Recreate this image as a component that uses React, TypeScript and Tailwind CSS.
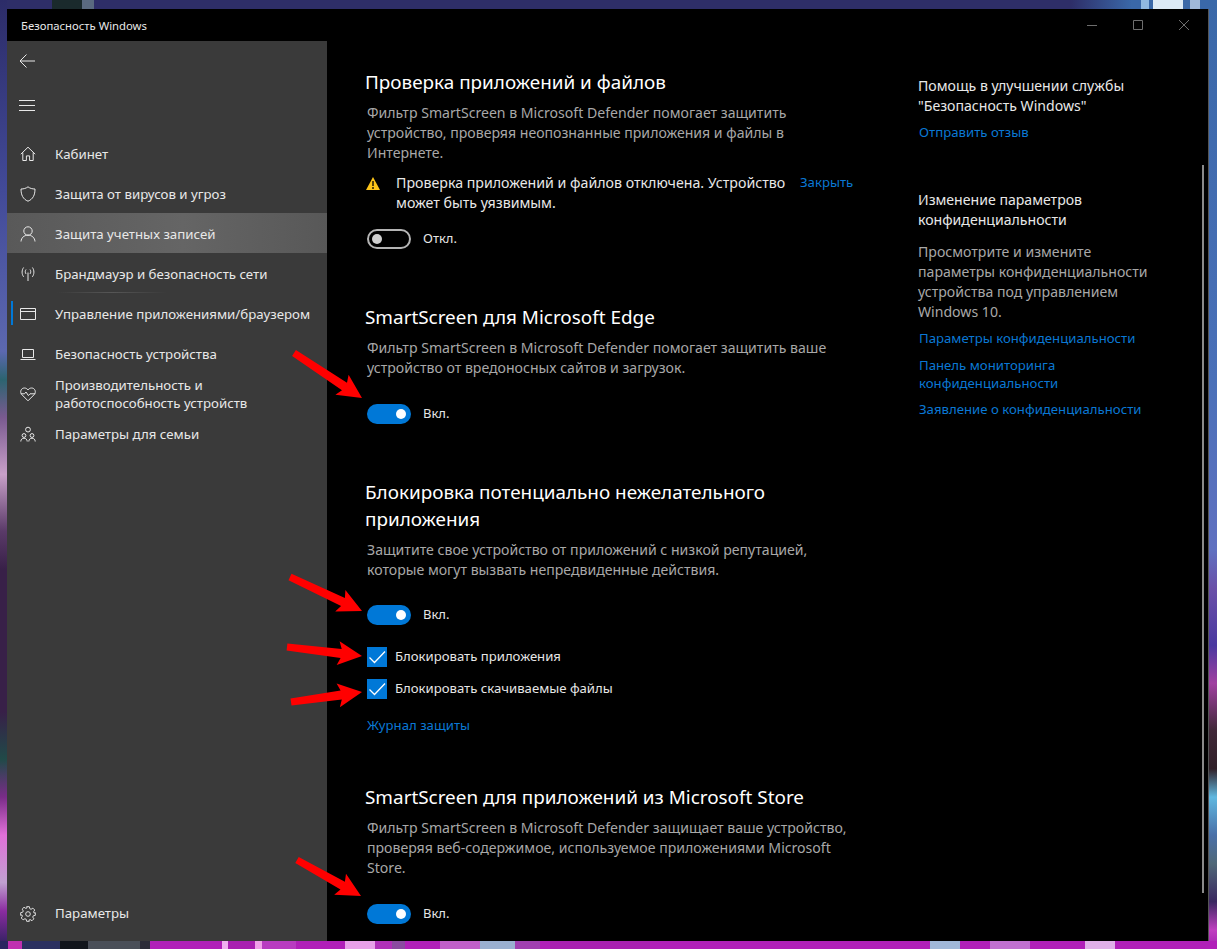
import React from "react";

const font = "font-['Noto_Sans',sans-serif]";

function arrowPoints(x1: number, y1: number, x2: number, y2: number) {
  const dx = x2 - x1;
  const dy = y2 - y1;
  const len = Math.hypot(dx, dy);
  const ux = dx / len;
  const uy = dy / len;
  const at = (along: number, side: number) => `${(x1 + ux * along - uy * side).toFixed(1)},${(y1 + uy * along + ux * side).toFixed(1)}`;
  const n = len - 23;
  return [at(0, -3.500), at(n + 2, -4.500), at(n - 1, -12), at(len, 0), at(n - 1, 12), at(n + 2, 4.500), at(0, 3.500)].join(" ");
}

const arrows = [
  [294, 353, 362, 398],
  [290, 577, 362, 611],
  [287, 647, 362, 656],
  [291, 702, 362, 692],
  [297, 860, 361, 896],
];

function Wallpaper() {
  const bottom: [number, number, string][] = [
    [0, 8, "#2a2560"], [8, 22, "#c030b0"], [22, 60, "#2b3060"], [60, 88, "#12161c"], [88, 140, "#4a4f58"], [140, 150, "#2c2c38"],
    [150, 222, "#b020b8"], [222, 228, "#f0b0f0"], [228, 255, "#a820b0"], [255, 262, "#f0a0e8"], [262, 296, "#b83cc0"],
    [296, 345, "#b020b8"], [345, 375, "#e8a0e8"], [375, 392, "#b030b8"], [392, 405, "#8a4aa0"], [405, 440, "#b020b8"],
    [440, 480, "#c060c8"], [480, 515, "#9ab0d0"], [515, 540, "#a040b0"],
  ];
  return (
    <svg className="absolute inset-0" width="1217" height="949" viewBox="0 0 1217 949">
      <defs>
        <linearGradient id="wl" x1="0" y1="0" x2="0" y2="1">
          <stop offset="0" stopColor="#2c2c68" />
          <stop offset="0.2" stopColor="#424a98" />
          <stop offset="0.37" stopColor="#5c68b0" />
          <stop offset="0.4" stopColor="#2c6470" />
          <stop offset="0.44" stopColor="#7a5a90" />
          <stop offset="0.5" stopColor="#c8a0c8" />
          <stop offset="0.56" stopColor="#5a3a68" />
          <stop offset="0.6" stopColor="#382048" />
          <stop offset="0.75" stopColor="#382048" />
          <stop offset="0.8" stopColor="#204a48" />
          <stop offset="0.84" stopColor="#7a2c88" />
          <stop offset="0.88" stopColor="#e070d8" />
          <stop offset="0.93" stopColor="#c0a0d0" />
          <stop offset="0.96" stopColor="#8a2ca0" />
          <stop offset="1" stopColor="#262058" />
        </linearGradient>
        <linearGradient id="wr" x1="0" y1="0" x2="0" y2="1">
          <stop offset="0" stopColor="#3a68a8" />
          <stop offset="0.4" stopColor="#4a70b8" />
          <stop offset="0.58" stopColor="#6070c0" />
          <stop offset="0.62" stopColor="#6a50a8" />
          <stop offset="0.68" stopColor="#4a38a0" />
          <stop offset="0.72" stopColor="#a040a0" />
          <stop offset="0.77" stopColor="#402838" />
          <stop offset="0.81" stopColor="#302028" />
          <stop offset="0.84" stopColor="#60b8e0" />
          <stop offset="0.88" stopColor="#4a70a8" />
          <stop offset="0.91" stopColor="#506878" />
          <stop offset="0.95" stopColor="#3a2860" />
          <stop offset="0.98" stopColor="#c040c0" />
          <stop offset="1" stopColor="#a020b0" />
        </linearGradient>
        <linearGradient id="wt" x1="0" y1="0" x2="1" y2="0">
          <stop offset="0" stopColor="#2e2e68" />
          <stop offset="0.88" stopColor="#2e2e68" />
          <stop offset="0.93" stopColor="#3a68a8" />
          <stop offset="1" stopColor="#3a68a8" />
        </linearGradient>
      </defs>
      <rect x="0" y="0" width="1217" height="9" fill="url(#wt)" />
      <rect x="52" y="0" width="30" height="9" fill="#1a2a2c" />
      <rect x="82" y="0" width="12" height="9" fill="#5a6a80" />
      <rect x="1141" y="0" width="8" height="9" fill="#90b8e0" />
      <rect x="1153" y="0" width="30" height="9" fill="#dceaf6" />
      <rect x="1190" y="0" width="10" height="9" fill="#a0b8d8" />
      <rect x="0" y="0" width="7" height="949" fill="url(#wl)" />
      <rect x="1208" y="0" width="9" height="949" fill="url(#wr)" />
      <rect x="0" y="941" width="1217" height="8" fill="#b020b8" />
      {bottom.map(([a, b, c]) => (
        <rect key={a} x={a} y="941" width={b - a} height="8" fill={c} />
      ))}
      <rect x="550" y="941" width="100" height="8" fill="#a820b0" />
      <rect x="930" y="941" width="30" height="8" fill="#a0b8d8" />
      <rect x="990" y="941" width="40" height="8" fill="#c070d0" />
      <rect x="1085" y="941" width="30" height="8" fill="#e0b0e8" />
    </svg>
  );
}

function Toggle({ on }: { on: boolean }) {
  return (
    <div className="flex items-center h-5 ml-px">
      {on ? (
        <div className="w-[44px] h-5 rounded-full bg-[#0078d7] flex items-center justify-end pr-[5px]">
          <div className="w-[10px] h-[10px] rounded-full bg-white" />
        </div>
      ) : (
        <div className="w-[44px] h-5 rounded-full border-2 border-[#b4b4b4] flex items-center pl-[3px]">
          <div className="w-[10px] h-[10px] rounded-full bg-[#cfcfcf]" />
        </div>
      )}
      <span className="ml-[12px] text-[13px] text-[#e6e6e6]">{on ? "Вкл." : "Откл."}</span>
    </div>
  );
}

function CheckRow({ label }: { label: string }) {
  return (
    <div className="flex items-center h-5 ml-px">
      <div className="w-5 h-5 bg-[#0078d7] flex items-center justify-center">
        <svg width="20" height="20" viewBox="0 0 20 20" fill="none" stroke="#fff" strokeWidth="1.300">
          <path d="M2.500 10.500 7.500 15.500 18 4.500" />
        </svg>
      </div>
      <span className="ml-2 text-[13.150px] text-[#e6e6e6]">{label}</span>
    </div>
  );
}

const Ic = ({ children }: { children: React.ReactNode }) => (
  <svg width="16" height="16" viewBox="0 0 16 16" fill="none" stroke="#e8e8e8" strokeWidth="1">
    {children}
  </svg>
);

const nav: { label: React.ReactNode; icon: React.ReactNode; sel?: boolean; ind?: boolean; line?: boolean }[] = [
  { label: "Кабинет", icon: <Ic><path d="M.8 8.200 8 1.200l7.200 7M2.800 6.500v8h3.600v-4.600h3.200v4.600h3.600v-8" /></Ic> },
  { label: "Защита от вирусов и угроз", icon: <Ic><path d="M8 .8c2 1.600 4.400 2.200 7 2.200 0 6-2 10.200-7 12.200C3 13.200 1 9 1 3c2.600 0 5-.6 7-2.200Z" /></Ic> },
  { label: "Защита учетных записей", sel: true, icon: <Ic><circle cx="8" cy="5" r="4.200" /><path d="M1 15.500c.3-3.800 3-6.300 7-6.300s6.700 2.500 7 6.300" /></Ic> },
  { label: "Брандмауэр и безопасность сети", line: true, icon: <Ic><path d="M8 6.500v8.500M6 3.500c-1 1.400-1 3 0 4.400M10 3.500c1 1.400 1 3 0 4.400M3.600 1.500c-2 2.800-2 6.500 0 9.300M12.400 1.500c2 2.800 2 6.500 0 9.300" /></Ic> },
  { label: "Управление приложениями/браузером", ind: true, icon: <Ic><path d="M.5 2.500h15v11H.5ZM.5 5.500h15" /></Ic> },
  { label: "Безопасность устройства", icon: <Ic><path d="M2.500 3.500h11v8h-11ZM.5 13.500h15" /></Ic> },
  { label: <>Производительность и<br />работоспособность устройств</>, icon: <Ic><path d="M8 14.800 1.800 8.600C-.6 5.800 1.200 2 4.400 2 6 2 7.200 2.800 8 4c.8-1.200 2-2 3.600-2 3.200 0 5 3.800 2.600 6.600L8 14.800ZM.8 7.800h3.700L6 6l2.400 3.600 1.600-1.800h5.200" /></Ic> },
  { label: "Параметры для семьи", icon: <Ic><circle cx="8" cy="3.600" r="2.400" /><circle cx="4" cy="9.500" r="1.900" /><circle cx="12" cy="9.500" r="1.900" /><path d="M.8 15.500c0-2 1.400-3.300 3.200-3.300s3.200 1.300 3.200 3.300M8.800 15.500c0-2 1.400-3.300 3.200-3.300s3.200 1.300 3.200 3.300" /></Ic> },
];

const Link = ({ children, cls = "" }: { children: React.ReactNode; cls?: string }) => (
  <div className={`text-[13.200px] text-[#0a78d4] ml-px ${cls}`}>{children}</div>
);
const H = ({ children, cls = "" }: { children: React.ReactNode; cls?: string }) => (
  <h2 className={`text-[18.900px] leading-[27px] text-white -ml-px ${cls}`}>{children}</h2>
);
const P = ({ children, cls = "" }: { children: React.ReactNode; cls?: string }) => (
  <p className={`text-[14.100px] leading-5 text-[#a8a8a8] ${cls}`}>{children}</p>
);

export default function App() {
  return (
    <div className={`${font} relative w-[1217px] h-[949px] overflow-hidden pl-[7px] pt-[9px] bg-[#2e2e68]`}>
      <Wallpaper />
      <div className="relative w-[1202px] h-[932px] bg-black flex flex-col border-r border-[#555]">
        <div className="h-8 shrink-0 flex items-center pl-[14px] pt-[2px]">
          <span className="text-[11.300px] text-[#e8e8e8]">Безопасность Windows</span>
          <div className="ml-auto flex items-center pr-[19px] gap-[36px] -mt-[2px]">
            <svg width="10" height="10" viewBox="0 0 10 10" stroke="#6e6e6e"><path d="M0 5.500h10" /></svg>
            <svg width="10" height="10" viewBox="0 0 10 10" stroke="#6e6e6e" fill="none"><path d="M.5.500h9v9h-9z" /></svg>
            <svg width="10" height="10" viewBox="0 0 10 10" stroke="#6e6e6e"><path d="m0 0 10 10M10 0 0 10" /></svg>
          </div>
        </div>
        <div className="flex-1 flex min-h-0">
          <aside className="w-[320px] bg-[#3a3a3a] flex flex-col text-[#e8e8e8] text-[13.250px]">
            <div className="h-10 pl-[12px] flex items-center">
              <svg width="16" height="14" viewBox="0 0 16 14" fill="none" stroke="#e8e8e8"><path d="M16 7H1M7.500.5 1 7l6.500 6.500" /></svg>
            </div>
            <div className="h-[49px] pl-[12px] flex items-center mb-[3px]">
              <svg width="16" height="11" viewBox="0 0 16 11" fill="none" stroke="#e8e8e8"><path d="M0 .5h16M0 5.500h16M0 10.500h16" /></svg>
            </div>
            {nav.map((n, i) => (
              <div key={i} className={`h-10 pt-px flex items-center pl-[13px] relative ${n.sel ? "bg-[linear-gradient(90deg,#595959,#656565_55%,#585858)]" : ""}`}>
                {n.ind && <div className="absolute left-[4px] top-[8px] w-[2px] h-[24px] bg-[#0078d7]" />}
                {n.line && <div className="absolute left-[50px] bottom-0 w-[110px] h-px bg-[linear-gradient(90deg,#3a3a3a,#565656,#3a3a3a)]" />}
                {n.icon}
                <span className="ml-[19px] leading-[18px]">{n.label}</span>
              </div>
            ))}
            <div className="mt-auto h-[54px] flex items-center pl-[13px]">
              <svg width="16" height="16" viewBox="0 0 24 24" fill="none" stroke="#e8e8e8" strokeWidth="1.400"><circle cx="12" cy="12" r="3.500" /><path d="M10 1h4l.7 3.100 1.900.8 2.700-1.700 2.800 2.800-1.700 2.700.8 1.900L23 10v4l-3.100.7-.8 1.900 1.700 2.700-2.800 2.800-2.700-1.700-1.900.8L14 23h-4l-.7-3.100-1.900-.8-2.700 1.700-2.800-2.800 1.700-2.700-.8-1.900L1 14v-4l3.100-.7.8-1.900-1.700-2.700 2.800-2.800 2.700 1.700 1.900-.8z" /></svg>
              <span className="ml-[19px]">Параметры</span>
            </div>
          </aside>

          <main className="relative flex-1 flex min-w-0">
            <div className="w-[552px] pl-[39px] pt-[28px]">
              <H>Проверка приложений и файлов</H>
              <P cls="mt-[7px] ml-px w-[470px]">Фильтр SmartScreen в Microsoft Defender помогает защитить устройство, проверяя неопознанные приложения и файлы в Интернете.</P>
              <div className="mt-[10px] flex items-start">
                <svg className="mt-[4px]" width="14" height="13" viewBox="0 0 14 13"><polygon points="7,0 14,13 0,13" fill="#fcc419" /><path d="M7 4v5M7 10v2" stroke="#000" strokeWidth="1.300" /></svg>
                <div className="ml-[16px] w-[403px] text-[14.200px] leading-5 text-[#e8e8e8]">Проверка приложений и файлов отключена. Устройство может быть уязвимым.</div>
                <Link cls="leading-5 -mt-[1px]">Закрыть</Link>
              </div>
              <div className="mt-[16px]"><Toggle on={false} /></div>

              <H cls="mt-[55px]">SmartScreen для Microsoft Edge</H>
              <P cls="mt-[7px] ml-px w-[475px]">Фильтр SmartScreen в Microsoft Defender помогает защитить ваше устройство от вредоносных сайтов и загрузок.</P>
              <div className="mt-[26px]"><Toggle on /></div>

              <H cls="mt-[55px] w-[470px]">Блокировка потенциально нежелательного приложения</H>
              <P cls="mt-[7px] ml-px w-[470px]">Защитите свое устройство от приложений с низкой репутацией, которые могут вызвать непредвиденные действия.</P>
              <div className="mt-[25px]"><Toggle on /></div>
              <div className="mt-[22px]"><CheckRow label="Блокировать приложения" /></div>
              <div className="mt-[12px]"><CheckRow label="Блокировать скачиваемые файлы" /></div>
              <Link cls="mt-[16px] leading-5">Журнал защиты</Link>

              <H cls="mt-[49px]">SmartScreen для приложений из Microsoft Store</H>
              <P cls="mt-[7px] ml-px w-[484px]">Фильтр SmartScreen в Microsoft Defender защищает ваше устройство, проверяя веб-содержимое, используемое приложениями Microsoft Store.</P>
              <div className="mt-[26px]"><Toggle on /></div>
            </div>

            <div className="w-[290px] pl-[39px] pt-[35px]">
              <div className="text-[14.100px] leading-5 text-[#e8e8e8]">Помощь в улучшении службы<br />"Безопасность Windows"</div>
              <Link cls="mt-[6px] leading-5">Отправить отзыв</Link>
              <div className="mt-[48px] text-[14.100px] leading-5 text-[#e8e8e8]">Изменение параметров<br />конфиденциальности</div>
              <P cls="mt-[12px] w-[240px]">Просмотрите и измените параметры конфиденциальности устройства под управлением Windows 10.</P>
              <Link cls="mt-[6px] leading-5">Параметры конфиденциальности</Link>
              <Link cls="mt-[8px] leading-[18px]">Панель мониторинга<br />конфиденциальности</Link>
              <Link cls="mt-[7px] leading-5">Заявление о конфиденциальности</Link>
            </div>

            <div className="absolute right-[4px] top-[124px] h-[728px] w-[2px] bg-[#8a8a8a]" />
          </main>
        </div>
      </div>
      <svg className="absolute inset-0 pointer-events-none" width="1217" height="949" viewBox="0 0 1217 949">
        {arrows.map(([a, b, c, d]) => (
          <polygon key={b} fill="#ff0000" points={arrowPoints(a, b, c, d)} />
        ))}
      </svg>
    </div>
  );
}
